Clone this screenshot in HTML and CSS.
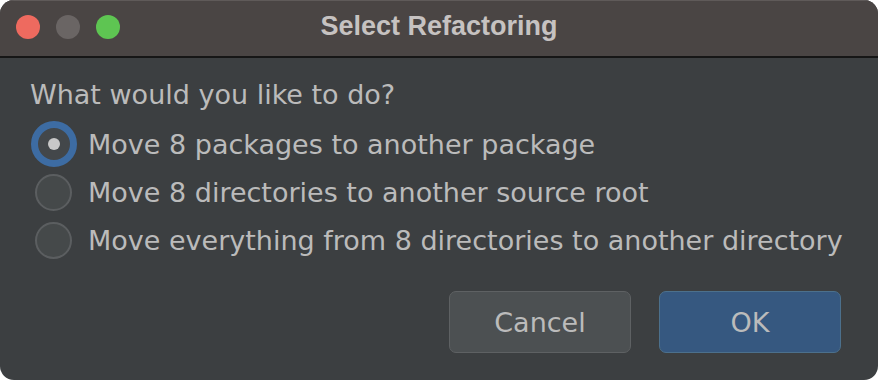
FILE: index.html
```html
<!DOCTYPE html>
<html lang="en">
<head>
<meta charset="UTF-8">
<title>Select Refactoring</title>
<link rel="stylesheet" href="styles.css">
</head>
<body>

<div class="window">
  <div class="titlebar">
    <div class="lights">
      <span class="light red"></span>
      <span class="light gray"></span>
      <span class="light green"></span>
    </div>
    <div class="title">Select Refactoring</div>
  </div>

  <div class="content">
    <div class="question">What would you like to do?</div>
    <div class="options">
      <label class="option">
        <span class="radio checked"><span class="dot"></span></span>
        <span class="label">Move 8 packages to another package</span>
      </label>
      <label class="option">
        <span class="radio"></span>
        <span class="label">Move 8 directories to another source root</span>
      </label>
      <label class="option">
        <span class="radio"></span>
        <span class="label">Move everything from 8 directories to another directory</span>
      </label>
    </div>

    <div class="buttons">
      <button class="button">Cancel</button>
      <button class="button primary">OK</button>
    </div>
  </div>
</div>

</body>
</html>
```

FILE: styles.css
```css
body {
  margin: 0;
  background-color: #ffffff;
  font-family: "DejaVu Sans", sans-serif;
}

.window {
  width: 878px;
  height: 380px;
  border-radius: 14px;
  overflow: hidden;
  background-color: #3c3f41;
  display: flex;
  flex-direction: column;
}

.titlebar {
  position: relative;
  background-color: #4a4544;
  border-top: 1px solid #5f5a59;
  border-bottom: 2px solid #161616;
  box-sizing: border-box;
  height: 58px;
  display: flex;
  align-items: center;
  justify-content: center;
}

.lights {
  position: absolute;
  left: 16px;
  top: 14px;
  display: flex;
  gap: 16px;
}

.light {
  width: 24px;
  height: 24px;
  border-radius: 50%;
}

.red { background-color: #ee6a5f; }
.gray { background-color: #6a6564; }
.green { background-color: #5ec552; }

.title {
  font-family: "Liberation Sans", Arial, sans-serif;
  font-weight: bold;
  font-size: 27px;
  color: #c6c2c1;
  margin-top: -4px;
}

.content {
  flex: 1;
  padding: 20px 30px 0 30px;
  color: #bbbbbb;
  font-size: 27px;
}

.question {
  height: 34px;
  line-height: 34px;
}

.options {
  margin-top: 8px;
}

.option {
  display: flex;
  align-items: center;
  height: 48px;
  gap: 16px;
}

.radio {
  width: 37px;
  height: 37px;
  margin-left: 5px;
  border-radius: 50%;
  border: 2px solid #5b5e60;
  background-color: #45494a;
  box-sizing: border-box;
  display: flex;
  align-items: center;
  justify-content: center;
}

.radio.checked {
  width: 46px;
  height: 46px;
  margin-left: 1px;
  margin-right: -5px;
  border: 7px solid #3d6ca3;
  background-color: #43474a;
}

.dot {
  width: 12px;
  height: 12px;
  border-radius: 50%;
  background-color: #c8c8c8;
}

.buttons {
  display: flex;
  justify-content: flex-end;
  gap: 28px;
  margin-top: 27px;
  margin-right: 7px;
}

.button {
  width: 182px;
  height: 62px;
  border-radius: 7px;
  border: 1px solid #5e6163;
  background-color: #4c5052;
  color: #bbbbbb;
  font-family: "DejaVu Sans", sans-serif;
  font-size: 27px;
}

.button.primary {
  background-color: #365880;
  border-color: #4c708c;
}
```
